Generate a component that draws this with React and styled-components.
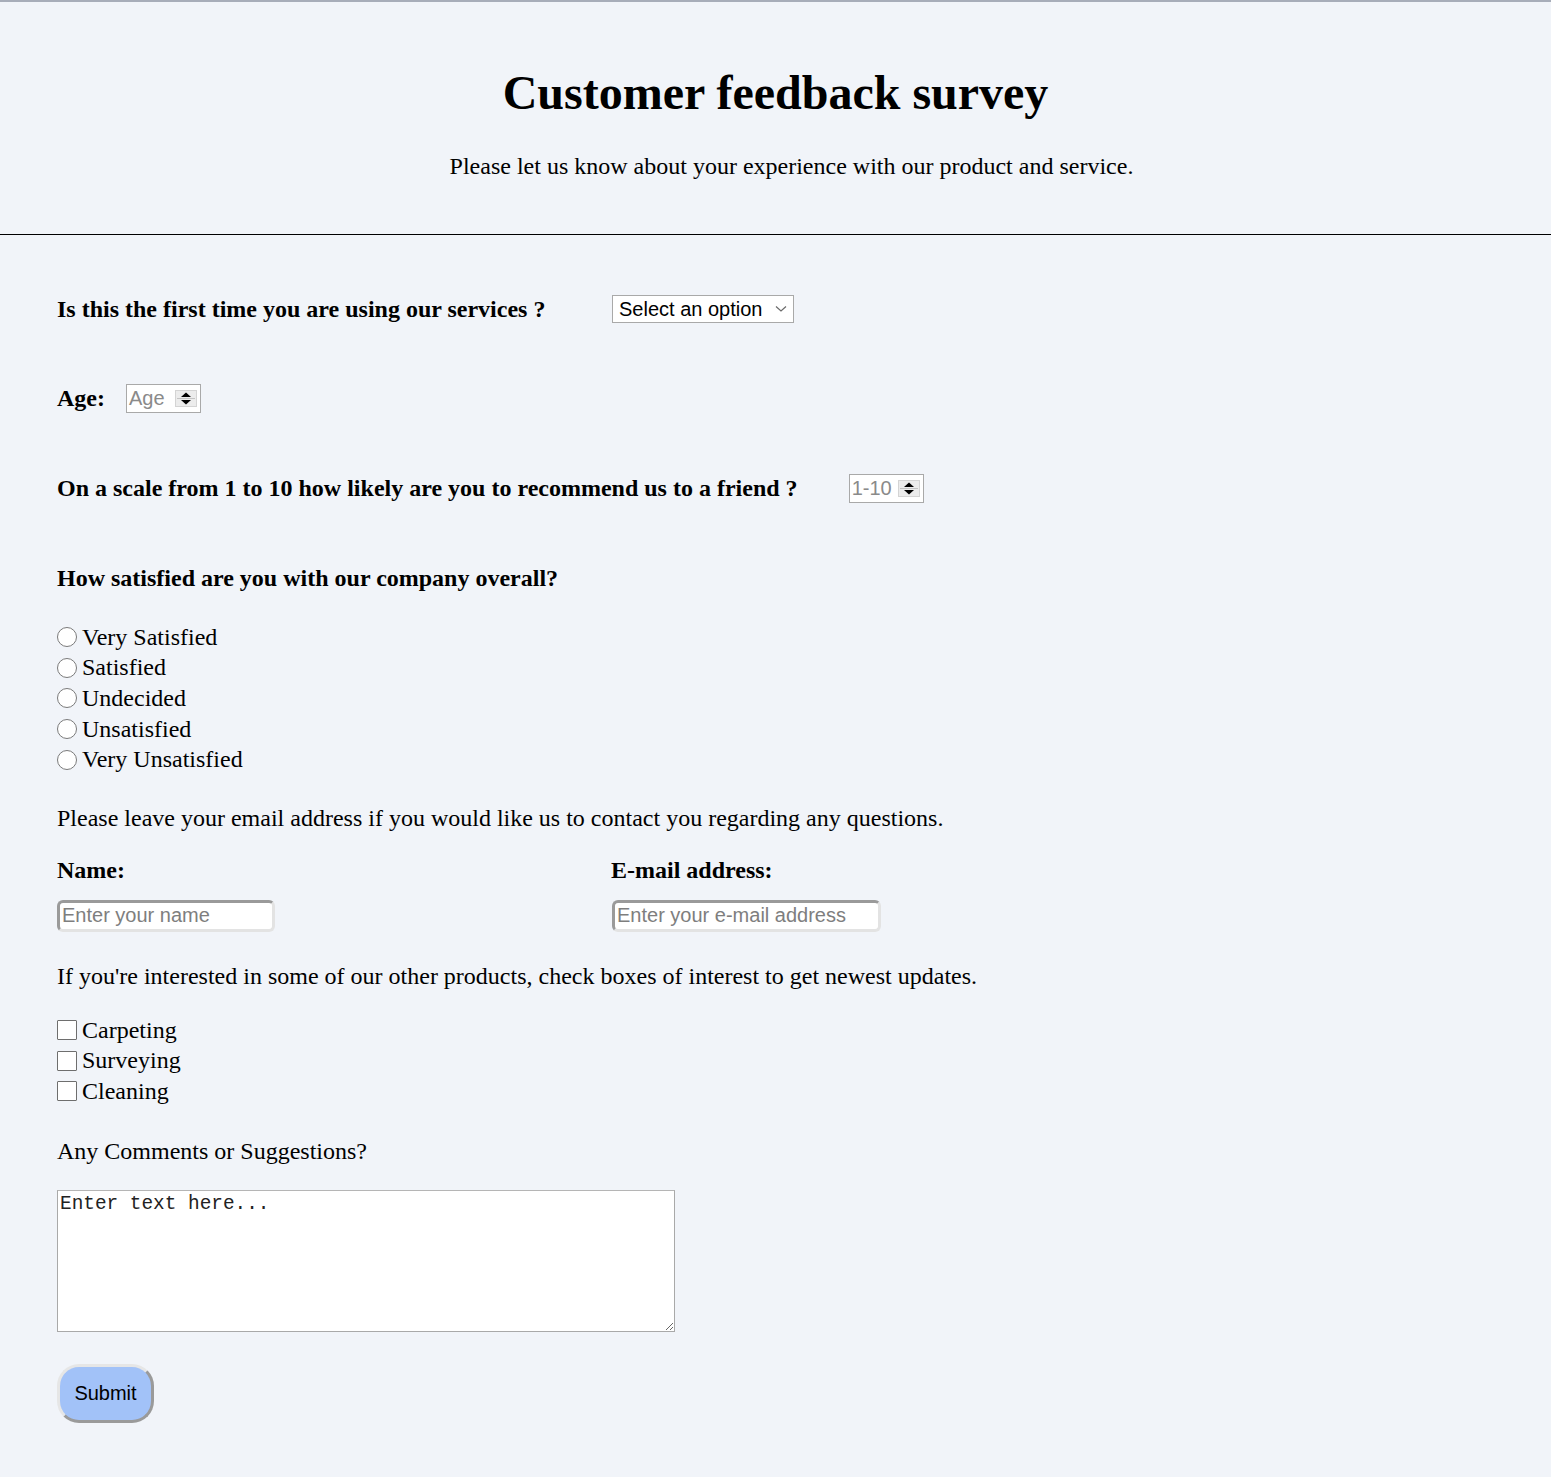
import React from "react";
import styled, { createGlobalStyle } from "styled-components";

const GlobalStyle = createGlobalStyle`
  body {
    margin: 0;
    background: #f1f4f9;
    font-family: "Liberation Serif", "Times New Roman", serif;
    color: #000;
  }
`;

const Header = styled.header`
  border-top: 2px solid #a7adb9;
  border-bottom: 1px solid #000;
  padding: 63px 0 55px;
  text-align: center;
`;

const Title = styled.h1`
  margin: 0;
  font-size: 48px;
  line-height: 56px;
  font-weight: bold;
`;

const Lead = styled.p`
  margin: 32px 0 0;
  padding-left: 32px;
  font-size: 24px;
  line-height: 26px;
`;

const Form = styled.form`
  display: flex;
  flex-direction: column;
  align-items: flex-start;
  padding: 0 57px 54px;
  font-size: 24px;
  line-height: 25px;
`;

const Row = styled.div`
  display: flex;
  align-items: center;
  gap: ${(p) => p.gap || 20}px;
  margin-top: ${(p) => p.top || 0}px;
  height: 29px;
`;

const Split = styled.div`
  display: grid;
  grid-template-columns: 554px auto;
  align-items: center;
  margin-top: ${(p) => p.top || 0}px;
`;

const Label = styled.label`
  font-weight: bold;
`;

const Text = styled.p`
  margin: ${(p) => p.top || 0}px 0 0;
`;

const Select = styled.div`
  display: flex;
  align-items: center;
  justify-content: space-between;
  box-sizing: border-box;
  width: 182px;
  height: 28px;
  margin-left: 1px;
  padding: 0 6px 0 6px;
  background: #fff;
  border: 1px solid #a9a9a9;
  font-family: "Liberation Sans", Arial, sans-serif;
  font-size: 20px;
  color: #000;
`;

const NumberBox = styled.div`
  display: flex;
  align-items: center;
  justify-content: space-between;
  box-sizing: border-box;
  width: ${(p) => p.w}px;
  height: 29px;
  padding: 0 3px 0 2px;
  background: #fff;
  border: 1px solid #a9a9a9;
  font-family: "Liberation Sans", Arial, sans-serif;
  font-size: 20px;
  color: #8a8a8a;
`;

const Spinner = styled.span`
  display: flex;
  width: 22px;
  height: 17px;
  background: #ececec;
  border: 1px solid #d4d4d4;
  box-sizing: border-box;
`;

const Options = styled.div`
  display: flex;
  flex-direction: column;
  margin-top: ${(p) => p.top || 0}px;
`;

const Option = styled.label`
  display: flex;
  align-items: center;
  height: 30.6px;
  gap: 5px;
`;

const Radio = styled.input.attrs({ type: "radio" })`
  appearance: none;
  margin: 0;
  width: 20px;
  height: 20px;
  border-radius: 50%;
  border: 1.5px solid #7a7a7a;
  background: #fff;
  box-sizing: border-box;
`;

const Check = styled.input.attrs({ type: "checkbox" })`
  appearance: none;
  margin: 0;
  width: 20px;
  height: 20px;
  border-radius: 1px;
  border: 1.5px solid #6e6e6e;
  background: #fff;
  box-sizing: border-box;
`;

const Field = styled.input`
  box-sizing: border-box;
  width: ${(p) => p.w}px;
  height: 32px;
  padding: 0 2px;
  border: 3px solid;
  border-color: #9a9a9a #e3e3e3 #e3e3e3 #9a9a9a;
  border-radius: 6px;
  background: #fff;
  font-family: "Liberation Sans", Arial, sans-serif;
  font-size: 20px;
  &::placeholder {
    color: #7e7e7e;
  }
`;

const Comments = styled.textarea`
  box-sizing: border-box;
  margin-top: 26px;
  width: 618px;
  height: 142px;
  padding: 2px;
  border: 1px solid #a9a9a9;
  border-top-color: #b5b5b5;
  background: #fff;
  font-family: "Liberation Mono", "Courier New", monospace;
  font-size: 19.4px;
  resize: both;
  &::placeholder {
    color: #222;
  }
`;

const Submit = styled.button`
  margin-top: 32px;
  width: 97px;
  height: 59px;
  border: 3px solid;
  border-color: #e6e6e6 #9a9a9a #9a9a9a #e6e6e6;
  border-radius: 22px;
  background: #a2c2f8;
  font-family: "Liberation Sans", Arial, sans-serif;
  font-size: 20px;
  color: #000;
`;

const Chevron = () => (
  <svg width="12" height="8" viewBox="0 0 12 8">
    <path d="M1 1.5 L6 6 L11 1.5" fill="none" stroke="#6a6a6a" strokeWidth="1.2" />
  </svg>
);

const SpinIcon = () => (
  <Spinner>
    <svg width="20" height="15" viewBox="0 0 20 15">
      <line x1="1" y1="7.5" x2="19" y2="7.5" stroke="#c4c4c4" strokeWidth="1" />
      <path d="M5 6 L10 1.5 L15 6 Z" fill="#000" />
      <path d="M5 9 L10 13.5 L15 9 Z" fill="#000" />
    </svg>
  </Spinner>
);

const satisfaction = [
  "Very Satisfied",
  "Satisfied",
  "Undecided",
  "Unsatisfied",
  "Very Unsatisfied",
];

const products = ["Carpeting", "Surveying", "Cleaning"];

export default function App() {
  return (
    <>
      <GlobalStyle />
      <Header>
        <Title>Customer feedback survey</Title>
        <Lead>Please let us know about your experience with our product and service.</Lead>
      </Header>
      <Form onSubmit={(e) => e.preventDefault()}>
        <Split top={60}>
          <Label>Is this the first time you are using our services ?</Label>
          <Select>
            Select an option
            <Chevron />
          </Select>
        </Split>

        <Row top={61} gap={21}>
          <Label>Age:</Label>
          <NumberBox w={75}>
            Age
            <SpinIcon />
          </NumberBox>
        </Row>

        <Row top={61} gap={51}>
          <Label>On a scale from 1 to 10 how likely are you to recommend us to a friend ?</Label>
          <NumberBox w={75}>
            1-10
            <SpinIcon />
          </NumberBox>
        </Row>

        <Text top={63}>
          <Label>How satisfied are you with our company overall?</Label>
        </Text>

        <Options top={31}>
          {satisfaction.map((s) => (
            <Option key={s}>
              <Radio name="satisfaction" />
              {s}
            </Option>
          ))}
        </Options>

        <Text top={31}>
          Please leave your email address if you would like us to contact you regarding any questions.
        </Text>

        <Split top={27}>
          <Label>Name:</Label>
          <Label>E-mail address:</Label>
        </Split>
        <Split top={17}>
          <Field w={218} placeholder="Enter your name" />
          <Field w={269} placeholder="Enter your e-mail address" style={{ marginLeft: 1 }} />
        </Split>

        <Text top={32}>
          If you're interested in some of our other products, check boxes of interest to get newest updates.
        </Text>

        <Options top={26}>
          {products.map((p) => (
            <Option key={p}>
              <Check />
              {p}
            </Option>
          ))}
        </Options>

        <Text top={32}>Any Comments or Suggestions?</Text>
        <Comments placeholder="Enter text here..." />

        <Submit type="submit">Submit</Submit>
      </Form>
    </>
  );
}
